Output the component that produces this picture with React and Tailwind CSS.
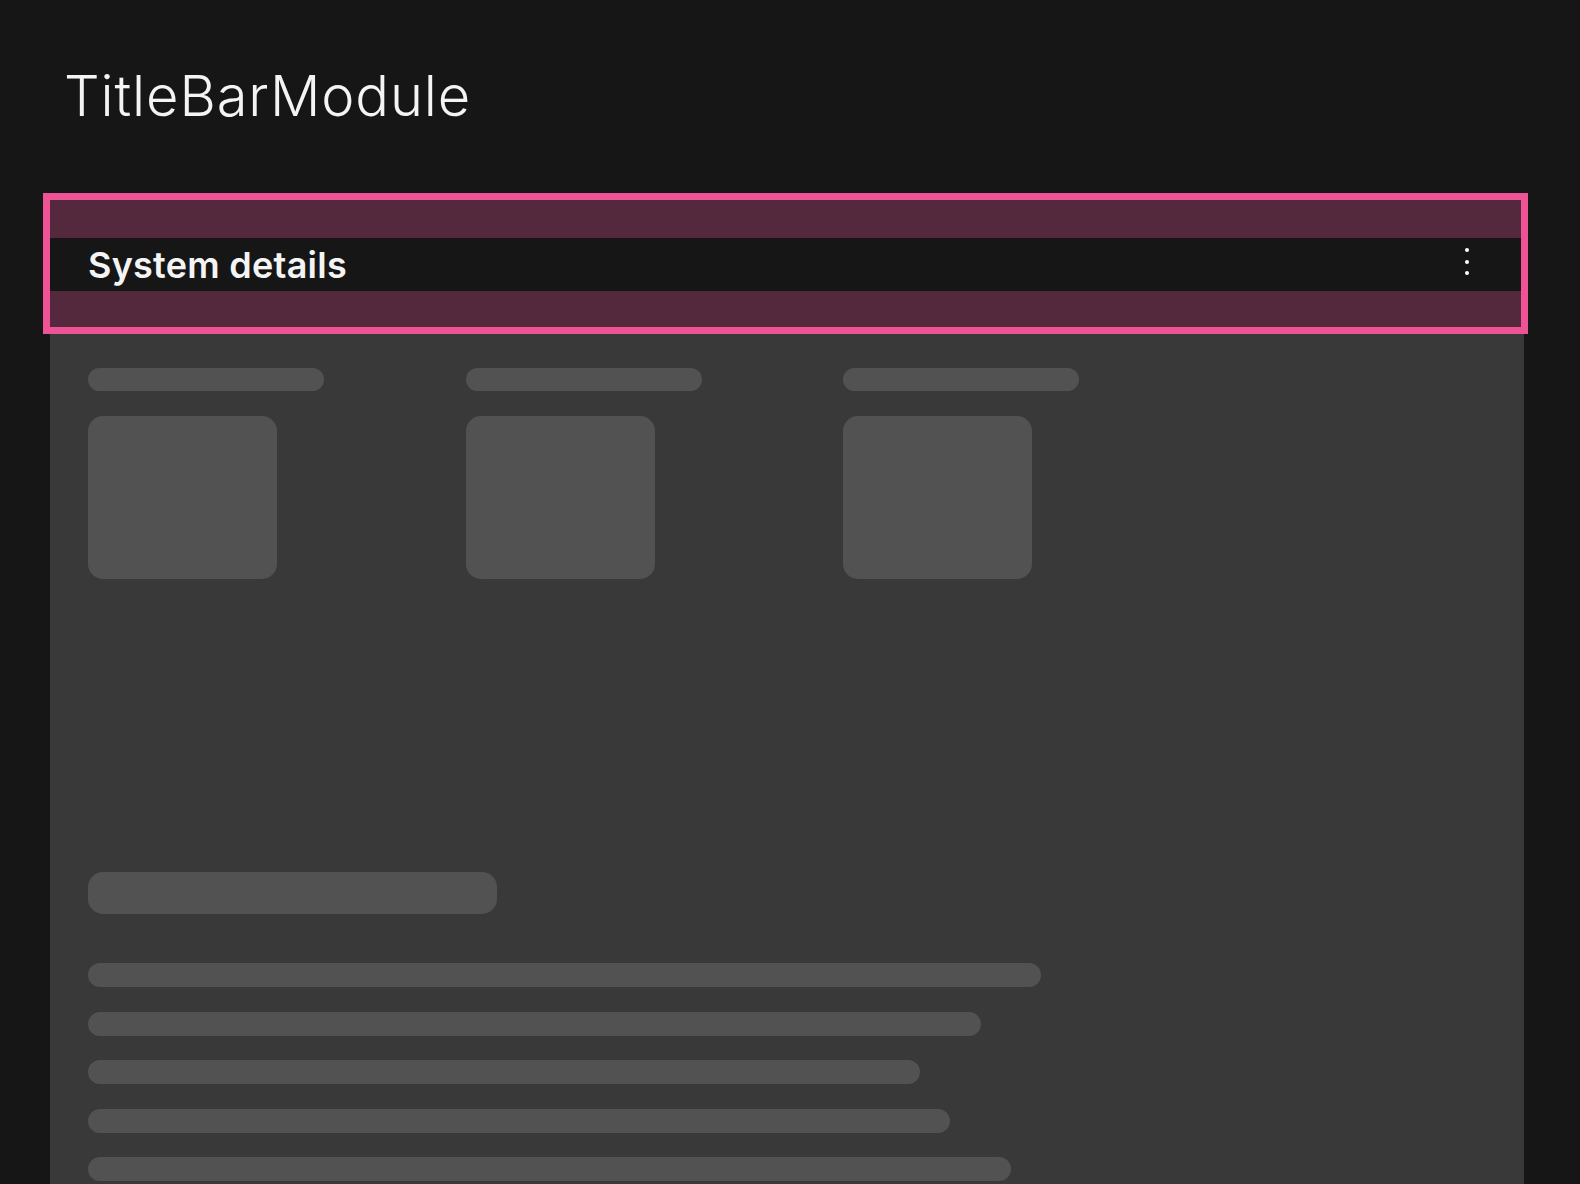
import React from "react";

const font = { fontFamily: "Inter, 'Noto Sans', 'Liberation Sans', sans-serif" };

function Column() {
  return (
    <div className="w-[377.5px] shrink-0 flex flex-col">
      <div className="h-[23px] w-[236px] rounded-full bg-[#525252]" />
      <div className="mt-[25px] h-[163px] w-[189px] rounded-[15px] bg-[#525252]" />
    </div>
  );
}

export default function App() {
  const lines = [953, 893, 832, 862, 923];
  return (
    <div
      className="h-[1184px] w-full overflow-hidden bg-[#161616] pl-[50px] pr-[56px]"
      style={font}
    >
      <h1 className="pt-[68px] pl-[14px] text-[56px] leading-[56px] font-light text-[#f4f4f4] tracking-[0.9px]">
        TitleBarModule
      </h1>
      <div className="relative mt-[76px] h-[984px] bg-[#393939]">
        {/* Title bar with padding highlight */}
        <div className="bg-[#55293d] py-[38px]">
          <div className="flex h-[53px] items-center justify-between bg-[#161616] pl-[38px] pr-[55px]">
            <span className="text-[36px] font-semibold leading-none text-[#f4f4f4] tracking-[0.25px]">
              System details
            </span>
            <div className="mb-[6px] flex flex-col items-center gap-[7.5px]">
              <span className="block h-[4px] w-[4px] rounded-full bg-white" />
              <span className="block h-[4px] w-[4px] rounded-full bg-white" />
              <span className="block h-[4px] w-[4px] rounded-full bg-white" />
            </div>
          </div>
        </div>
        <div className="pointer-events-none absolute left-[-7px] top-[-7px] h-[141px] w-[1485px] border-[7px] border-[#ee5396]" />

        {/* Skeleton content */}
        <div className="px-[38px] pt-[39px]">
          <div className="flex">
            <Column />
            <Column />
            <Column />
          </div>
          <div className="mt-[293px] h-[42px] w-[409px] rounded-[15px] bg-[#525252]" />
          <div className="mt-[49px] flex flex-col gap-[24.5px]">
            {lines.map((w, i) => (
              <div
                key={i}
                className="h-[24px] rounded-full bg-[#525252]"
                style={{ width: w }}
              />
            ))}
          </div>
        </div>
      </div>
    </div>
  );
}
